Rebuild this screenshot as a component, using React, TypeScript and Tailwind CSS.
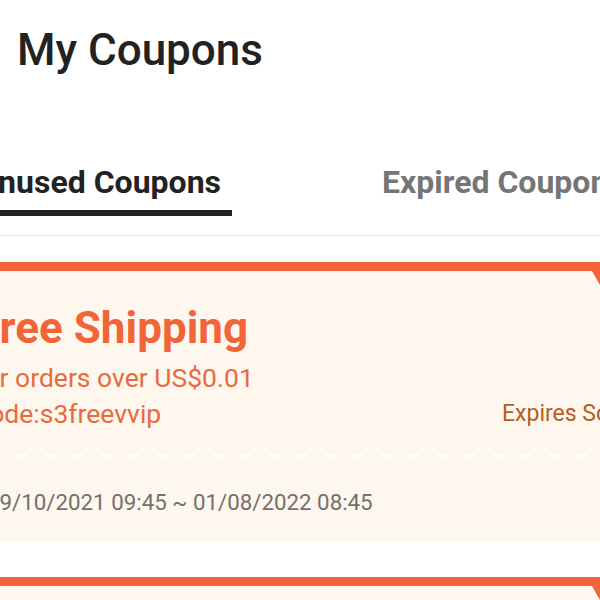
import React from "react";

function CouponCard({ last }: { last?: boolean }) {
  return (
    <div className="relative -ml-[40px] w-[640px] border-t-[9px] border-[#f4633a] bg-[#fdf7ee]">
      <svg className="absolute right-0 top-0" width="8" height="14" viewBox="0 0 8 14">
        <polygon points="0,0 8,0 8,14" fill="#f4633a" />
      </svg>
      {!last && (
        <div className="pl-[16px] pt-[32px]">
          <div className="text-[44px] leading-[50px] font-bold text-[#f26539] whitespace-nowrap">Free Shipping</div>
          <div className="mt-[7px] -ml-[6px] text-[26.5px] leading-[36px] text-[#ea6a40] whitespace-nowrap">For orders over US$0.01</div>
          <div className="flex items-baseline">
            <div className="flex-1 -ml-[4px] text-[26.5px] leading-[36px] text-[#ea6a40] whitespace-nowrap">Code:s3freevvip</div>
            <div className="w-[98px] -translate-y-[2px] text-[23px] leading-[36px] text-[#b95c1e] whitespace-nowrap">Expires Soon</div>
          </div>
          <div className="mt-[20px] -ml-[16px] h-[3px] w-[640px] bg-[repeating-linear-gradient(90deg,transparent_0_1px,#ffffff_1px_11px,transparent_11px_28px)]" />
          <div className="mt-[30px] ml-[11px] pb-[24px] text-[22.3px] leading-[30px] text-[#75706c] whitespace-nowrap">
            09/10/2021 09:45 ~ 01/08/2022 08:45
          </div>
        </div>
      )}
      {last && <div className="h-[40px]" />}
    </div>
  );
}

export default function App() {
  return (
    <div
      className="w-[600px] h-[600px] overflow-hidden bg-white"
      style={{ fontFamily: "Roboto, 'Noto Sans', sans-serif" }}
    >
      <h1 className="pl-[17px] pt-[24px] text-[44px] leading-[52px] font-medium text-[#222222] whitespace-nowrap">
        My Coupons
      </h1>
      <div className="mt-[86px] flex border-b border-[#e6e6e6] pb-[19px]">
        <div className="-ml-[34px] w-[266px] shrink-0 flex flex-col items-center">
          <span className="text-[32px] leading-[40px] font-bold text-[#222222] whitespace-nowrap">Unused Coupons</span>
          <div className="mt-[8px] h-[6px] w-full bg-[#222222]" />
        </div>
        <div className="ml-[150px] shrink-0">
          <span className="text-[32px] leading-[40px] font-bold text-[#757575] whitespace-nowrap">Expired Coupons</span>
        </div>
      </div>
      <div className="mt-[26px]">
        <CouponCard />
      </div>
      <div className="mt-[36px]">
        <CouponCard last />
      </div>
    </div>
  );
}
